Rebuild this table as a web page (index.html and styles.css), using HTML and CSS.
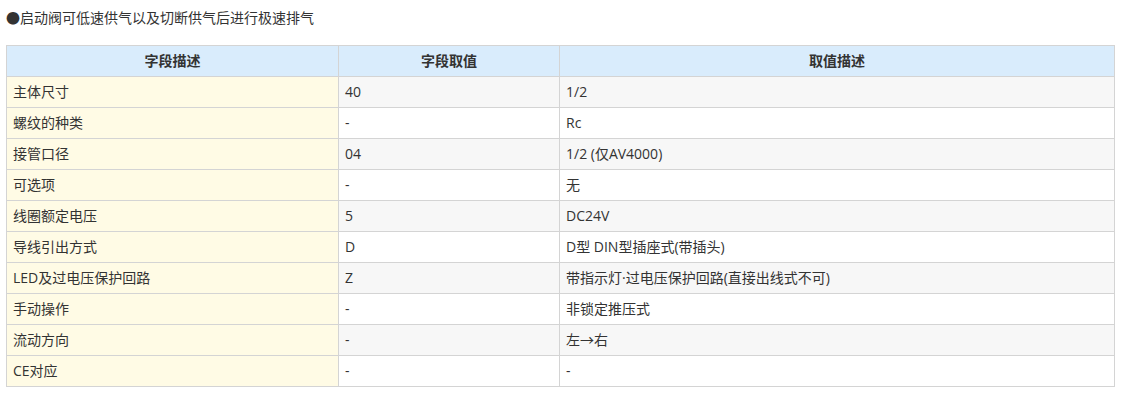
FILE: index.html
```html
<!DOCTYPE html>
<html lang="zh-CN">
<head>
<meta charset="utf-8">
<link rel="stylesheet" href="styles.css">
</head>
<body>
<div class="page">
  <p class="note">●启动阀可低速供气以及切断供气后进行极速排气</p>
  <table class="spec">
    <colgroup>
      <col class="c1"><col class="c2"><col class="c3">
    </colgroup>
    <thead>
      <tr><th>字段描述</th><th>字段取值</th><th>取值描述</th></tr>
    </thead>
    <tbody>
      <tr><td class="key">主体尺寸</td><td>40</td><td>1/2</td></tr>
      <tr><td class="key">螺纹的种类</td><td>-</td><td>Rc</td></tr>
      <tr><td class="key">接管口径</td><td>04</td><td>1/2 (仅AV4000)</td></tr>
      <tr><td class="key">可选项</td><td>-</td><td>无</td></tr>
      <tr><td class="key">线圈额定电压</td><td>5</td><td>DC24V</td></tr>
      <tr><td class="key">导线引出方式</td><td>D</td><td>D型 DIN型插座式(带插头)</td></tr>
      <tr><td class="key">LED及过电压保护回路</td><td>Z</td><td>带指示灯·过电压保护回路(直接出线式不可)</td></tr>
      <tr><td class="key">手动操作</td><td>-</td><td>非锁定推压式</td></tr>
      <tr><td class="key">流动方向</td><td>-</td><td>左→右</td></tr>
      <tr><td class="key">CE对应</td><td>-</td><td>-</td></tr>
    </tbody>
  </table>
</div>
</body>
</html>
```

FILE: styles.css
```css
html, body {
  margin: 0;
  padding: 0;
  background: #ffffff;
}
body {
  font-family: "Open Sans", "Noto Sans CJK SC", "Noto Sans", sans-serif;
  font-size: 14px;
  color: #333333;
}
.page {
  padding: 6px 7px 0 6px;
}
.note {
  margin: 0 0 15px 0;
  line-height: 24px;
}
.spec {
  width: 1108px;
  border-collapse: collapse;
  table-layout: fixed;
}
.spec .c1 { width: 332px; }
.spec .c2 { width: 221px; }
.spec .c3 { width: 555px; }
.spec th,
.spec td {
  border: 1px solid #d4d4d4;
  height: 31px;
  padding: 0 6px;
  line-height: 20px;
  text-align: left;
  box-sizing: border-box;
}
.spec th {
  background: #d9ecfc;
  font-weight: bold;
  text-align: center;
  color: #333333;
}
.spec tbody tr:nth-child(odd) td {
  background: #f7f7f7;
}
.spec tbody tr:nth-child(even) td {
  background: #ffffff;
}
.spec tbody tr td.key {
  background: #fffbe5;
}
```
